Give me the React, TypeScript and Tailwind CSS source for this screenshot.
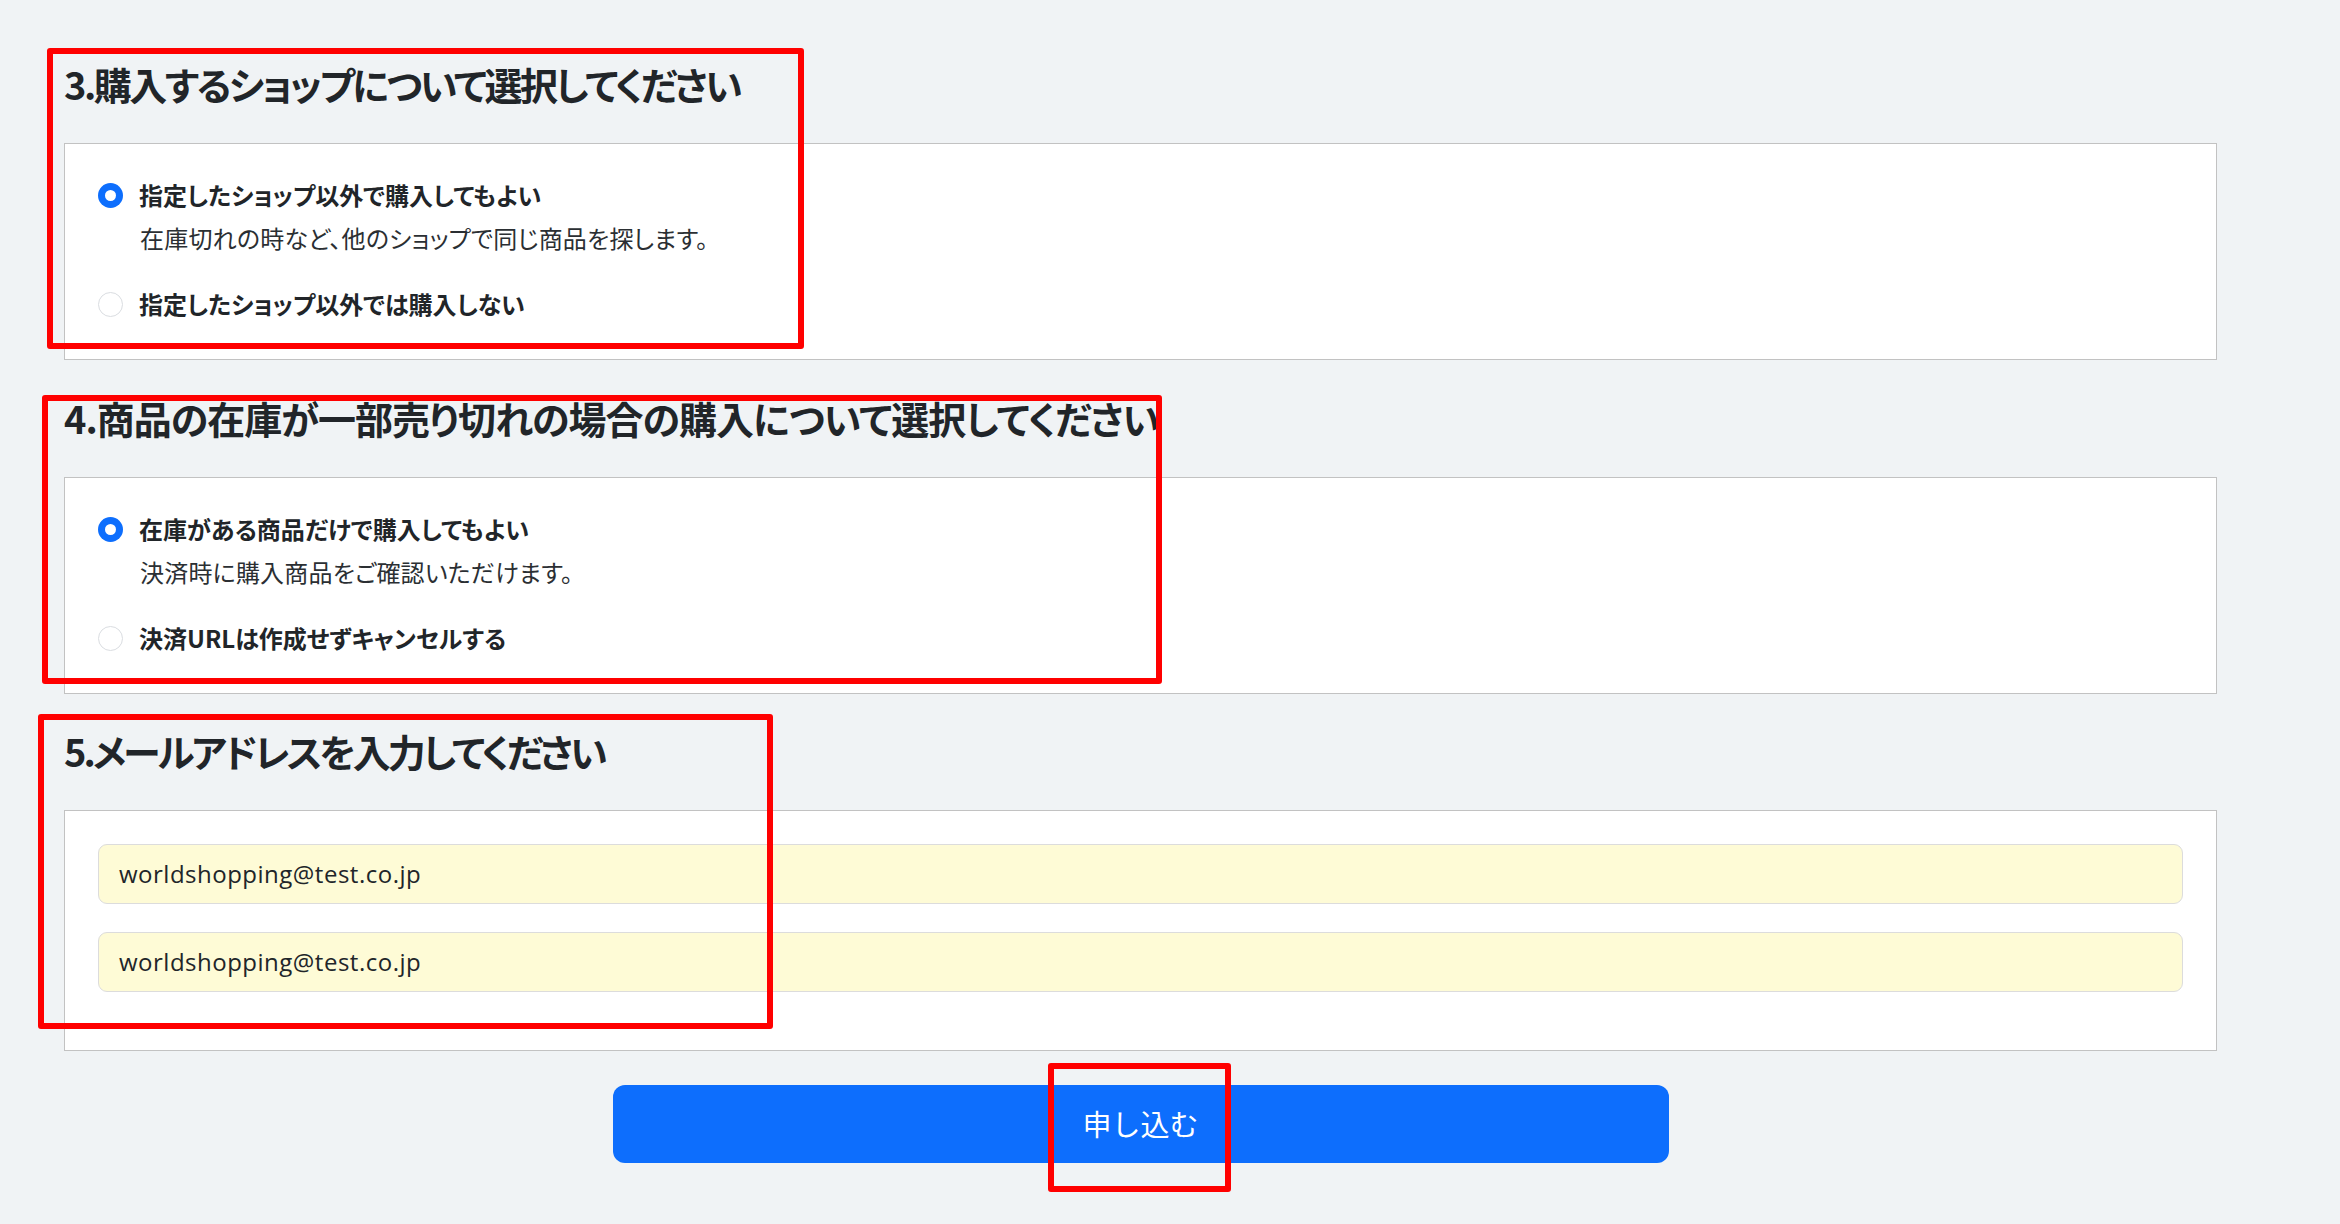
import React from "react";

function Radio({ checked }: { checked: boolean }) {
  if (checked) {
    return (
      <div className="flex h-[25px] w-[25px] shrink-0 items-center justify-center rounded-full bg-[#0d6efd]">
        <div className="h-[11px] w-[11px] rounded-full bg-white" />
      </div>
    );
  }
  return <div className="h-[25px] w-[25px] shrink-0 rounded-full border border-[#dadde1] bg-white" />;
}

function Heading({ children, mt, tracking }: { children: React.ReactNode; mt: string; tracking: string }) {
  return (
    <h2
      className={`${mt} ${tracking} mb-[34px] h-[44px] text-[38px] font-bold leading-[38px] text-[#212529] [font-feature-settings:'palt']`}
    >
      {children}
    </h2>
  );
}

function ChoiceCard({ opt1, desc, opt2 }: { opt1: string; desc: string; opt2: string }) {
  return (
    <div className="border border-[#c2c2c2] bg-white px-[33px] pb-[37px] pt-[33px]">
      <div className="flex h-[36px] items-center">
        <Radio checked />
        <span className="ml-[16px] text-[24px] font-bold leading-[36px] [font-feature-settings:'palt']">
          {opt1}
        </span>
      </div>
      <div className="mt-[7px] pl-[42px] text-[24px] leading-[36px] tracking-[0.2px] text-[#2b2f33] [font-feature-settings:'palt']">
        {desc}
      </div>
      <div className="mt-[30px] flex h-[36px] items-center">
        <Radio checked={false} />
        <span className="ml-[16px] text-[24px] font-bold leading-[36px] [font-feature-settings:'palt']">
          {opt2}
        </span>
      </div>
    </div>
  );
}

function EmailField({ value, className }: { value: string; className?: string }) {
  return (
    <div
      className={`flex h-[60px] items-center rounded-[9px] border border-[#dcdcdc] bg-[#fefbd6] pl-[20px] font-['Open_Sans',sans-serif] text-[24px] tracking-[0.5px] text-[#212529] ${className ?? ""}`}
    >
      {value}
    </div>
  );
}

export default function App() {
  return (
    <div className="relative min-h-screen w-full bg-[#f0f3f5] font-['Noto_Sans_CJK_JP',sans-serif] text-[#212529]">
      <div className="ml-[64px] w-[2153px] pb-[60px] pt-[65px]">
        <Heading mt="mt-0" tracking="tracking-[-2.5px]">
          3.購入するショップについて選択してください
        </Heading>
        <ChoiceCard
          opt1="指定したショップ以外で購入してもよい"
          desc="在庫切れの時など、他のショップで同じ商品を探します。"
          opt2="指定したショップ以外では購入しない"
        />

        <Heading mt="mt-[39px]" tracking="tracking-[-1px]">
          4.商品の在庫が一部売り切れの場合の購入について選択してください
        </Heading>
        <ChoiceCard
          opt1="在庫がある商品だけで購入してもよい"
          desc="決済時に購入商品をご確認いただけます。"
          opt2="決済URLは作成せずキャンセルする"
        />

        <Heading mt="mt-[38px]" tracking="tracking-[-3px]">
          5.メールアドレスを入力してください
        </Heading>
        <div className="border border-[#c2c2c2] bg-white px-[33px] pb-[58px] pt-[33px]">
          <EmailField value="worldshopping@test.co.jp" />
          <EmailField value="worldshopping@test.co.jp" className="mt-[28px]" />
        </div>

        <button
          type="button"
          className="mx-auto mt-[34px] flex h-[78px] w-[1056px] items-center justify-center rounded-[12px] bg-[#0d6efd] text-[29px] text-white"
        >
          申し込む
        </button>
      </div>

      {/* red annotation boxes */}
      <div className="pointer-events-none absolute left-[47px] top-[48px] h-[301px] w-[757px] rounded-[3px] border-[6px] border-[#ff0000]" />
      <div className="pointer-events-none absolute left-[42px] top-[395px] h-[289px] w-[1120px] rounded-[3px] border-[6px] border-[#ff0000]" />
      <div className="pointer-events-none absolute left-[38px] top-[714px] h-[315px] w-[735px] rounded-[3px] border-[6px] border-[#ff0000]" />
      <div className="pointer-events-none absolute left-[1048px] top-[1063px] h-[129px] w-[183px] rounded-[3px] border-[6px] border-[#ff0000]" />
    </div>
  );
}
